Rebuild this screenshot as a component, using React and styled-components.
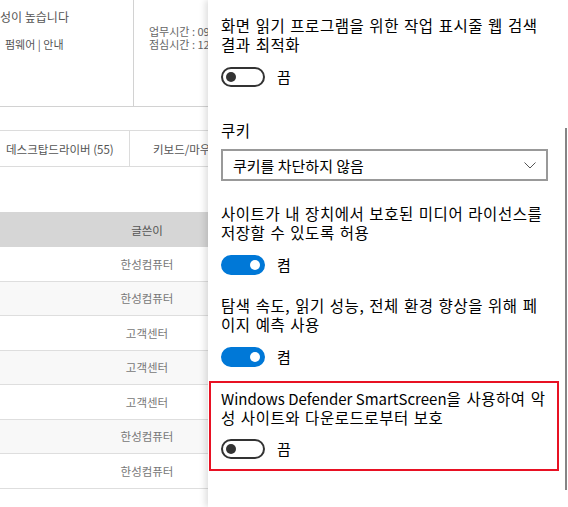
import styled, { createGlobalStyle } from "styled-components";

const GlobalStyle = createGlobalStyle`
  html, body {
    margin: 0;
    padding: 0;
    background: #fff;
  }
  body {
    font-family: "Noto Sans CJK KR", "Noto Sans", sans-serif;
    overflow: hidden;
  }
`;

const rows = [
  { writer: "한성컴퓨터", alt: false },
  { writer: "한성컴퓨터", alt: true },
  { writer: "고객센터", alt: false },
  { writer: "고객센터", alt: true },
  { writer: "고객센터", alt: false },
  { writer: "한성컴퓨터", alt: true },
  { writer: "한성컴퓨터", alt: false },
];

const settings = [
  {
    title: "사이트가 내 장치에서 보호된 미디어 라이선스를 저장할 수 있도록 허용",
    on: true,
    gap: 23,
  },
  {
    title: "탐색 속도, 읽기 성능, 전체 환경 향상을 위해 페이지 예측 사용",
    on: true,
    gap: 21,
  },
];

function Toggle({ on, gap = 13 }) {
  return (
    <ToggleRow $gap={gap}>
      <Switch $on={on}>
        <Knob $on={on} />
      </Switch>
      <ToggleLabel>{on ? "켬" : "끔"}</ToggleLabel>
    </ToggleRow>
  );
}

export default function App() {
  return (
    <>
      <GlobalStyle />
      <Screen>
        <Page>
          <TopArea>
            <Notice>
              <NoticeText>성이 높습니다</NoticeText>
              <NoticeLink>펌웨어 | 안내</NoticeLink>
            </Notice>
            <Hours>
              <span>업무시간 : 09:00 ~ 18:00</span>
              <span>점심시간 : 12:00 ~ 13:00</span>
            </Hours>
          </TopArea>
          <Tabs>
            <Tab $first>데스크탑드라이버 (55)</Tab>
            <Tab>키보드/마우스</Tab>
          </Tabs>
          <Table>
            <HeadRow>
              <Cell />
              <Cell>글쓴이</Cell>
              <Cell />
            </HeadRow>
            {rows.map((r, i) => (
              <Row key={i} $alt={r.alt}>
                <Cell />
                <Cell>{r.writer}</Cell>
                <Cell />
              </Row>
            ))}
          </Table>
        </Page>

        <Panel>
          <Section $gap={16}>
            <Title>화면 읽기 프로그램을 위한 작업 표시줄 웹 검색 결과 최적화</Title>
            <Toggle on={false} />
          </Section>

          <Section $gap={34}>
            <Title>쿠키</Title>
            <Select>
              <span>쿠키를 차단하지 않음</span>
              <svg width="12" height="7" viewBox="0 0 12 7">
                <path d="M0.5 0.5 L6 6 L11.5 0.5" fill="none" stroke="#555" strokeWidth="1" />
              </svg>
            </Select>
          </Section>

          {settings.map((s, i) => (
            <Section key={i} $gap={s.gap}>
              <Title>{s.title}</Title>
              <Toggle on={s.on} />
            </Section>
          ))}

          <Highlight>
            <Title>
              <Latin>Windows Defender SmartScreen</Latin>을 사용하여 악성 사이트와 다운로드로부터 보호
            </Title>
            <Toggle on={false} gap={12} />
          </Highlight>

          <ScrollThumb />
        </Panel>
      </Screen>
    </>
  );
}

const Screen = styled.div`
  display: flex;
  width: 568px;
  height: 507px;
  overflow: hidden;
`;

const Page = styled.div`
  width: 208px;
  flex-shrink: 0;
  overflow: hidden;
  font-size: 11.5px;
  color: #666;
`;

const TopArea = styled.div`
  display: flex;
  height: 106px;
  width: 300px;
  border-bottom: 1px solid #d2d2d2;
`;

const Notice = styled.div`
  width: 134px;
  border-right: 1px solid #d2d2d2;
  display: flex;
  flex-direction: column;
  padding-top: 9px;
  box-sizing: border-box;
`;

const NoticeText = styled.div`
  font-size: 12px;
  color: #555;
  line-height: 16px;
`;

const NoticeLink = styled.div`
  margin-top: 11px;
  padding-left: 5px;
  font-size: 11px;
  color: #555;
  line-height: 16px;
`;

const Hours = styled.div`
  display: flex;
  flex-direction: column;
  padding: 25px 0 0 15px;
  font-size: 11px;
  line-height: 13px;
  color: #666;
  white-space: nowrap;
`;

const Tabs = styled.div`
  display: flex;
  margin-top: 23px;
  width: 300px;
  height: 35px;
  border-top: 1px solid #dcdcdc;
  border-bottom: 1px solid #dcdcdc;
`;

const Tab = styled.div`
  display: flex;
  align-items: center;
  white-space: nowrap;
  color: #555;
  box-sizing: border-box;
  ${(p) =>
    p.$first
      ? `width: 130px; padding-left: 6px; border-right: 1px solid #dcdcdc;`
      : `padding-left: 23px;`}
`;

const Table = styled.div`
  margin-top: 45px;
  width: 300px;
`;

const HeadRow = styled.div`
  display: grid;
  grid-template-columns: 94px 106px 1fr;
  height: 35px;
  background: #d6d6d6;
  color: #555;
`;

const Row = styled.div`
  display: grid;
  grid-template-columns: 94px 106px 1fr;
  height: 34.5px;
  box-sizing: border-box;
  border-bottom: 1px solid #dedede;
  background: ${(p) => (p.$alt ? "#f8f8f8" : "#fff")};
  color: #777;
`;

const Cell = styled.div`
  display: flex;
  align-items: center;
  justify-content: center;
  white-space: nowrap;
`;

const Panel = styled.div`
  position: relative;
  flex: 1;
  background: #fff;
  padding: 0 0 0 13px;
  box-shadow: -3px 0 6px rgba(0, 0, 0, 0.12);
  color: #000;
  font-size: 15.5px;
`;

const Section = styled.div`
  width: 327px;
  padding-top: ${(p) => p.$gap}px;
`;

const Title = styled.div`
  width: 326px;
  line-height: 19px;
  letter-spacing: 0.55px;
  word-spacing: 1px;
`;

const Latin = styled.span`
  font-size: 15px;
  letter-spacing: 0;
  word-spacing: 0;
`;

const Select = styled.div`
  display: flex;
  align-items: center;
  justify-content: space-between;
  margin-top: 9px;
  height: 32px;
  box-sizing: border-box;
  border: 2px solid #999;
  padding: 0 10px 0 10px;
  font-size: 15px;

  svg {
    margin-top: 1px;
  }
`;

const ToggleRow = styled.div`
  display: flex;
  align-items: center;
  margin-top: ${(p) => p.$gap}px;
  height: 20px;
`;

const Switch = styled.div`
  position: relative;
  width: 44px;
  height: 20px;
  box-sizing: border-box;
  border-radius: 10px;
  border: 2px solid ${(p) => (p.$on ? "#0078d7" : "#333")};
  background: ${(p) => (p.$on ? "#0078d7" : "#fff")};
`;

const Knob = styled.div`
  position: absolute;
  top: 3px;
  left: ${(p) => (p.$on ? "27px" : "3px")};
  width: 10px;
  height: 10px;
  border-radius: 50%;
  background: ${(p) => (p.$on ? "#fff" : "#333")};
`;

const ToggleLabel = styled.span`
  margin-left: 12px;
  font-size: 15px;
  line-height: 20px;
`;

const Highlight = styled.div`
  width: 327px;
  margin: 14px 0 0 -12px;
  padding: 6px 9px 10px 10px;
  border: 2px solid #e81123;
  box-sizing: content-box;
`;

const ScrollThumb = styled.div`
  position: absolute;
  right: 1px;
  top: 128px;
  width: 2px;
  height: 362px;
  background: #858585;
`;
